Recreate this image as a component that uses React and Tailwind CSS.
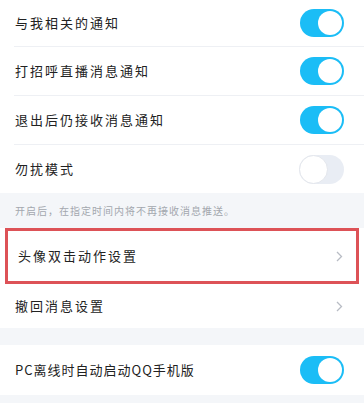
import React from "react";

const font = { fontFamily: '"Noto Sans CJK SC", "Noto Sans", sans-serif' };

function Toggle({ on }) {
    return on ? (
        <div className="w-[44px] h-[28px] rounded-full bg-[#1bbdf6] flex items-center justify-end px-[2px]">
            <div className="w-[24px] h-[24px] rounded-full bg-white" />
        </div>
    ) : (
        <div className="w-[45px] h-[29px] rounded-full bg-[#e9edf4] flex items-center">
            <div className="w-[29px] h-[29px] rounded-full bg-white border border-[#e3e6ec]" />
        </div>
    );
}

function Chevron() {
    return (
        <svg width="7" height="11" viewBox="0 0 7 11" fill="none">
            <path d="M1 1l4.5 4.5L1 10" stroke="#b8bcc4" strokeWidth="1.3" />
        </svg>
    );
}

function Row({ label, right, h = "h-[48px]", divider = true, tracking = "tracking-[2px]" }) {
    return (
        <div className="bg-white pl-[14px]">
            <div className={"flex items-center justify-between pr-[20px] " + h + (divider ? " border-b border-[#eef0f4]" : "")}>
                <span className={"text-[13px] text-[#222] pl-[1px] " + tracking}>{label}</span>
                {right}
            </div>
        </div>
    );
}

export default function App() {
    return (
        <div className="w-[364px] h-[403px] overflow-hidden bg-[#f4f6f9]" style={font}>
            <Row label="与我相关的通知" h="h-[47px]" right={<Toggle on />} />
            <Row label="打招呼直播消息通知" h="h-[49px]" right={<Toggle on />} />
            <Row label="退出后仍接收消息通知" h="h-[49px]" right={<Toggle on />} />
            <Row label="勿扰模式" h="h-[48px]" divider={false} right={<Toggle />} />

            {/* hint */}
            <div className="h-[35px] flex items-center pl-[15px]">
                <span className="text-[10px] tracking-[1px] text-[#a3a7ae]">
                    开启后，在指定时间内将不再接收消息推送。
                </span>
            </div>

            {/* highlighted row */}
            <div className="bg-white">
                <div className="mx-[5px] h-[56px] border-[3px] border-[#dd5257] flex items-center justify-between pl-[10px] pr-[13px]">
                    <span className="text-[13px] tracking-[2px] text-[#222]">头像双击动作设置</span>
                    <Chevron />
                </div>
            </div>

            <div className="bg-white pl-[15px]">
                <div className="h-[44px] flex items-center justify-between pr-[21px]">
                    <span className="text-[13px] tracking-[2px] text-[#222]">撤回消息设置</span>
                    <Chevron />
                </div>
            </div>

            <div className="h-[17px]" />

            <Row
                label="PC离线时自动启动QQ手机版"
                h="h-[50px]"
                divider={false}
                tracking="tracking-[1px]"
                right={<Toggle on />}
            />
        </div>
    );
}
